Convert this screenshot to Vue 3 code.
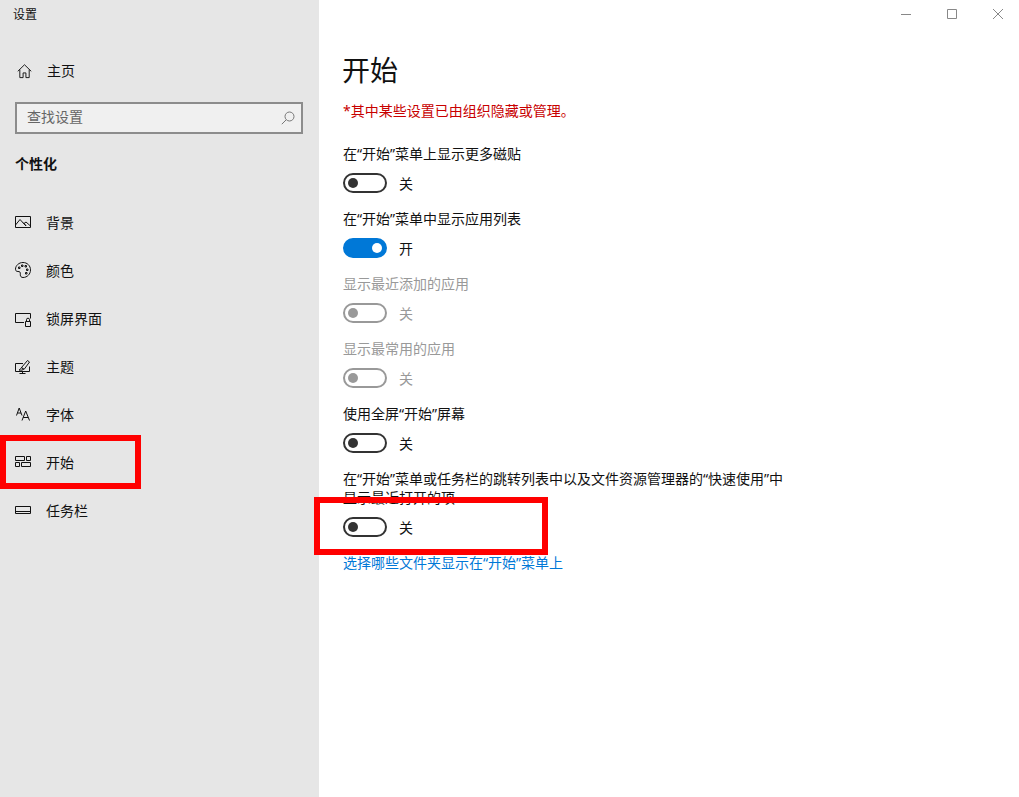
<script setup>
const navItems = [
  { label: '背景', paths: ['M0.5 1.5h15v11h-15z', 'M0.5 10L5 4.5l6 6.5', 'M9 8.5l2-1.5 4.5 4', 'M8 7.5l3 3'] },
  { label: '颜色', paths: ['M8 -0.5C3.8 -0.5 0.5 2.6 0.5 6.2c0 2.6 2.2 2.2 3.6 2.4 1.6.3 1.2 2 1.2 3.2 0 1.6 1 2.7 2.7 2.7 4.2 0 7.5-3.4 7.5-7.6S12.2 -0.5 8 -0.5z', 'M3.5 4h1.5v1.5h-1.5z', 'M6.5 2h1.5v1.5h-1.5z', 'M10 2.5h1.5v1.5h-1.5z', 'M11.5 6h1.5v1.5h-1.5z', 'M10.5 9.5h1.5v1.5h-1.5z'] },
  { label: '锁屏界面', paths: ['M9 11.5H0.5v-9h15v5', 'M10.5 10.5h5v5h-5z', 'M11.5 10.5V8.7a1.5 1.5 0 0 1 3 0v1.8'] },
  { label: '主题', paths: ['M8 4.5H0.5v8h14V7.5', 'M4.5 14.5h6', 'M7.5 12.5v2', 'M6.5 8.5l6-7 2 1.5-5.5 7.5z', 'M4 11c1.5 0 1.5-2.5 3-2.5l1.5 1.5c0 1-2.5 1.5-4.5 1z'] },
  { label: '字体', paths: ['M1.5 8.5L4.2 1 7 8.5', 'M2.5 6h3.5', 'M7 13.5L10.7 4l3.8 9.5', 'M8.2 10.5h5'] },
  { label: '开始', paths: ['M0.5 1.5h9v4h-9z', 'M11.5 1.5h4v4h-4z', 'M0.5 7.5h4v4h-4z', 'M6.5 7.5h9v4h-9z'] },
  { label: '任务栏', paths: ['M0.5 3.5h15v7h-15z', 'M0.5 8.5h15'] },
]
const rows = [
  { label: '在“开始”菜单上显示更多磁贴', on: false, disabled: false },
  { label: '在“开始”菜单中显示应用列表', on: true, disabled: false },
  { label: '显示最近添加的应用', on: false, disabled: true },
  { label: '显示最常用的应用', on: false, disabled: true },
  { label: '使用全屏“开始”屏幕', on: false, disabled: false },
  { label: '在“开始”菜单或任务栏的跳转列表中以及文件资源管理器的“快速使用”中显示最近打开的项', on: false, disabled: false, long: true },
]
</script>

<template>
  <div class="window">
    <aside class="sidebar">
      <div class="app-title">设置</div>
      <div class="home">
        <svg class="icon" viewBox="0 0 16 16" fill="none" stroke="#111">
          <path d="M0.8 7.8L8 0.8l7.2 7M3 6v8.5h3.5V9.5h3v5H13V6" />
        </svg>
        <span class="nudge">主页</span>
      </div>
      <div class="search">
        <span class="placeholder">查找设置</span>
        <svg class="search-icon" viewBox="0 0 14 14" fill="none" stroke="#777">
          <circle cx="8.5" cy="5.5" r="4.5" />
          <path d="M5.2 8.8L0.8 13.2" />
        </svg>
      </div>
      <div class="section">个性化</div>
      <nav class="nav">
        <div v-for="item in navItems" :key="item.label" class="nav-item">
          <svg class="icon" viewBox="0 0 16 16" fill="none" stroke="#111">
            <path v-for="d in item.paths" :key="d" :d="d" />
          </svg>
          <span class="nudge">{{ item.label }}</span>
        </div>
      </nav>
    </aside>

    <main class="main">
      <div class="controls">
        <span class="ctrl"><svg viewBox="0 0 10 10" fill="none" stroke="#888"><path d="M0 5.5h10" /></svg></span>
        <span class="ctrl"><svg viewBox="0 0 10 10" fill="none" stroke="#888"><path d="M0.5 0.5h9v9h-9z" /></svg></span>
        <span class="ctrl"><svg viewBox="0 0 10 10" fill="none" stroke="#888"><path d="M0 0l10 10M10 0L0 10" /></svg></span>
      </div>
      <div class="content">
        <h1 class="title">开始</h1>
        <p class="warning">*其中某些设置已由组织隐藏或管理。</p>
        <div v-for="row in rows" :key="row.label" class="row" :class="{ disabled: row.disabled }">
          <div class="row-label" :class="{ long: row.long }">{{ row.label }}</div>
          <div class="toggle-line">
            <span class="toggle" :class="{ on: row.on }"><i class="knob"></i></span>
            <span>{{ row.on ? '开' : '关' }}</span>
          </div>
        </div>
        <a class="link">选择哪些文件夹显示在“开始”菜单上</a>
      </div>
    </main>

    <div class="mark mark-nav"></div>
    <div class="mark mark-toggle"></div>
  </div>
</template>

<style scoped>
.window {
  position: relative;
  display: flex;
  min-height: 797px;
  height: 100vh;
  overflow: hidden;
  background: #fff;
  color: #111;
  font-family: "Noto Sans", "Noto Sans CJK SC", sans-serif;
  font-size: 14px;
}
.sidebar {
  width: 319px;
  flex: none;
  background: #e6e6e6;
}
.app-title {
  height: 30px;
  padding-left: 13px;
  font-size: 12px;
  line-height: 30px;
}
.home {
  display: flex;
  align-items: center;
  gap: 15px;
  height: 48px;
  margin-top: 17px;
  padding-left: 17px;
}
.nudge {
  margin-bottom: 2px;
}
.placeholder {
  margin-bottom: 4px;
}
.icon {
  width: 16px;
  height: 16px;
  flex: none;
  overflow: visible;
}
.home .icon {
  width: 15px;
  height: 15px;
}
.search {
  display: flex;
  align-items: center;
  justify-content: space-between;
  box-sizing: border-box;
  height: 32px;
  margin: 7px 16px 0 15px;
  padding: 0 6px 0 10px;
  border: 2px solid #8c8c8c;
  background: #f0f0f0;
  color: #666;
}
.search-icon {
  width: 14px;
  height: 14px;
}
.section {
  margin: 20px 0 25px 15px;
  font-weight: 700;
  line-height: 20px;
}
.nav-item {
  display: flex;
  align-items: center;
  gap: 15px;
  height: 48px;
  padding-left: 15px;
}
.main {
  flex: 1;
  min-width: 0;
}
.controls {
  display: flex;
  justify-content: flex-end;
  height: 30px;
  margin-right: -2px;
}
.ctrl {
  display: flex;
  align-items: center;
  justify-content: center;
  width: 46px;
  height: 28px;
}
.ctrl svg {
  width: 10px;
  height: 10px;
}
.content {
  padding-left: 24px;
}
.title {
  margin: 20px 0 0 -1px;
  font-size: 28px;
  font-weight: 400;
  line-height: 40px;
}
.warning {
  margin: 12px 0 25px;
  color: #c80000;
  line-height: 18px;
}
.row {
  margin-bottom: 17px;
}
.row-label {
  max-width: 445px;
  line-height: 18px;
}
.row-label.long {
  line-height: 18.5px;
}
.toggle-line {
  display: flex;
  align-items: center;
  gap: 12px;
  height: 20px;
  margin-top: 10px;
}
.toggle {
  position: relative;
  box-sizing: border-box;
  width: 44px;
  height: 20px;
  border: 2px solid #333;
  border-radius: 10px;
}
.knob {
  position: absolute;
  top: 3px;
  left: 3px;
  width: 10px;
  height: 10px;
  border-radius: 50%;
  background: #333;
}
.toggle.on {
  border-color: #0078d7;
  background: #0078d7;
}
.toggle.on .knob {
  left: auto;
  right: 3px;
  background: #fff;
}
.disabled {
  color: #999;
}
.disabled .toggle {
  border-color: #999;
}
.disabled .knob {
  background: #999;
}
.link {
  display: block;
  color: #0078d7;
  line-height: 18px;
}
.mark {
  position: absolute;
  box-sizing: border-box;
  border: 6px solid #ff0000;
}
.mark-nav {
  left: 0;
  top: 435px;
  width: 141px;
  height: 54px;
}
.mark-toggle {
  left: 314px;
  top: 497px;
  width: 234px;
  height: 58px;
}
</style>
